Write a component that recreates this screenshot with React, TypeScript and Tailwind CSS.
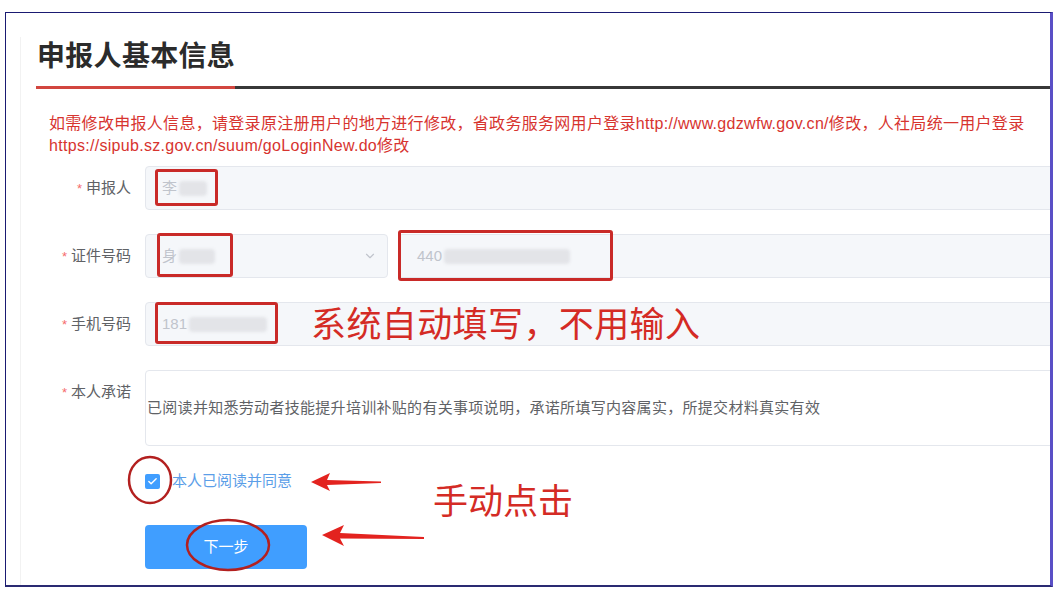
import React from "react";
import { ChevronDown, Check } from "lucide-react";

const Label: React.FC<{ text: string }> = ({ text }) => (
  <div className="w-[110px] shrink-0 h-[44px] leading-[44px] text-right text-[15px] text-[#606266]">
    <span className="text-[#f56c6c] mr-1 text-[13px]">*</span>
    {text}
  </div>
);

const Blur: React.FC<{ w: string }> = ({ w }) => (
  <span className={`inline-block h-[15px] ${w} bg-[#e3e4e8] blur-[1.5px] rounded-sm ml-[2px]`} />
);

export default function App() {
  return (
    <div className="relative w-[1058px] h-[596px] bg-white pt-[12px] pl-[5px] font-['Liberation_Sans','Noto_Sans_CJK_SC',sans-serif]">
      {/* screenshot frame */}
      <div className="w-[1048px] h-[575px] border-t border-l border-b-2 border-r-[3px] border-t-[#1a1a72] border-l-[#1a1a72] border-b-[#2a2a72] border-r-[#5a4fc6] overflow-hidden">
        <div className="ml-[14px] h-full border-l border-[#f2f2f2]">
          <h1 className="mt-[24px] pl-[16px] h-[40px] leading-[40px] text-[28px] font-bold text-[#2b2b2b] tracking-[0.3px]">申报人基本信息</h1>
          <div className="mt-[9px] ml-[15px] flex h-[3px]">
            <div className="w-[199px] bg-[#d2463f]" />
            <div className="flex-1 bg-[#383838]" />
          </div>
          <p className="mt-[24px] ml-[28px] text-[16px] leading-[22px] tracking-[0.3px] text-[#d7342f]">
            如需修改申报人信息，请登录原注册用户的地方进行修改，省政务服务网用户登录http://www.gdzwfw.gov.cn/修改，人社局统一用户登录
            <br />
            https://sipub.sz.gov.cn/suum/goLoginNew.do修改
          </p>

          <div className="mt-[9px] flex flex-col gap-6">
            {/* 申报人 */}
            <div className="flex gap-[14px]">
              <Label text="申报人" />
              <div className="flex-1 mr-[-10px] h-[44px] bg-[#f5f7fa] border border-[#e4e7ed] rounded flex items-center pl-[16px] text-[15px] text-[#c0c4cc]">
                李<Blur w="w-[28px]" />
              </div>
            </div>
            {/* 证件号码 */}
            <div className="flex gap-[14px]">
              <Label text="证件号码" />
              <div className="w-[243px] h-[44px] bg-[#f5f7fa] border border-[#e4e7ed] rounded flex items-center pl-[16px] pr-[10px] text-[15px] text-[#c0c4cc]">
                身<Blur w="w-[36px]" />
                <ChevronDown size={14} className="ml-auto text-[#c0c4cc]" />
              </div>
              <div className="flex-1 ml-[-4px] mr-[-10px] h-[44px] bg-[#f5f7fa] border border-[#e4e7ed] rounded flex items-center pl-[18px] text-[15px] text-[#c0c4cc]">
                440<Blur w="w-[126px]" />
              </div>
            </div>
            {/* 手机号码 */}
            <div className="flex gap-[14px]">
              <Label text="手机号码" />
              <div className="flex-1 mr-[-10px] h-[44px] bg-[#f5f7fa] border border-[#e4e7ed] rounded flex items-center pl-[16px] text-[15px] text-[#c0c4cc]">
                181<Blur w="w-[78px]" />
              </div>
            </div>
            {/* 本人承诺 */}
            <div className="flex gap-[14px]">
              <Label text="本人承诺" />
              <div className="flex-1 mr-[-10px] h-[76px] bg-white border border-[#e4e7ed] rounded flex items-center pl-[1px] text-[15px] tracking-[0.3px] text-[#606266]">
                已阅读并知悉劳动者技能提升培训补贴的有关事项说明，承诺所填写内容属实，所提交材料真实有效
              </div>
            </div>
          </div>

          <div className="mt-[24px] ml-[124px] h-[22px] flex items-center gap-[12px]">
            <span className="w-[15px] h-[15px] rounded-[2px] bg-[#409eff] flex items-center justify-center">
              <Check size={11} strokeWidth={3} className="text-white" />
            </span>
            <span className="text-[15px] text-[#5b9ee8]">本人已阅读并同意</span>
          </div>

          <button className="mt-[33px] ml-[124px] w-[162px] h-[44px] rounded bg-[#409eff] text-white text-[15px]">下一步</button>
        </div>
      </div>

      {/* annotations */}
      <div className="absolute left-[155px] top-[169px] w-[63px] h-[37px] border-[3px] border-[#c92a28] rounded-[3px]" />
      <div className="absolute left-[157px] top-[233px] w-[76px] h-[44px] border-[3px] border-[#c92a28] rounded-[3px]" />
      <div className="absolute left-[398px] top-[230px] w-[215px] h-[51px] border-[3px] border-[#c92a28] rounded-[3px]" />
      <div className="absolute left-[155px] top-[302px] w-[123px] h-[42px] border-[3px] border-[#c92a28] rounded-[3px]" />

      <div className="absolute left-[311px] top-[307px] text-[35px] leading-[36px] tracking-[0.4px] text-[#d42b25] whitespace-nowrap">系统自动填写，不用输入</div>
      <div className="absolute left-[433px] top-[484px] text-[35px] leading-[36px] text-[#d42b25] whitespace-nowrap">手动点击</div>

      <svg className="absolute left-0 top-0 pointer-events-none" width="1058" height="596" viewBox="0 0 1058 596">
        <polygon points="311,482 330,473 327,480 381,481.5 381,483 327,485 330,491" fill="#e3231f" />
        <polygon points="322,535 344,525 340,533 424,537 424,539 340,538.5 344,546" fill="#e3231f" />
        <ellipse cx="150" cy="480" rx="21" ry="23" fill="none" stroke="#b3201f" strokeWidth="2.5" />
        <ellipse cx="228" cy="545" rx="41" ry="25" fill="none" stroke="#b3201f" strokeWidth="2.5" />
      </svg>
    </div>
  );
}
